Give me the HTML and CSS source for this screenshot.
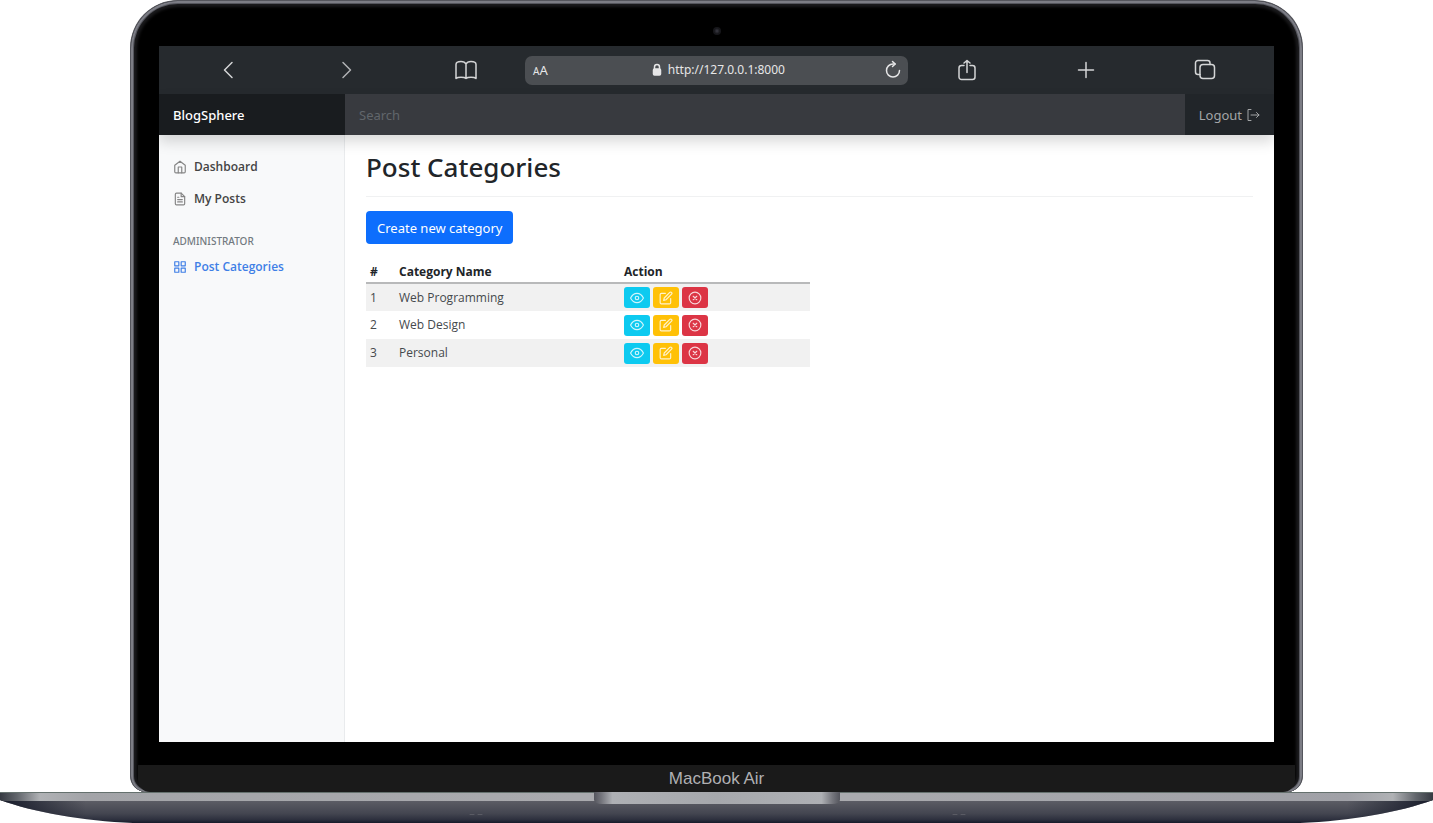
FILE: index.html
```
<!DOCTYPE html>
<html lang="en">
<head>
<meta charset="utf-8">
<title>Post Categories - BlogSphere</title>
<link rel="stylesheet" href="styles.css">
</head>
<body>
<svg class="sprite" aria-hidden="true">
  <symbol id="eye" viewBox="0 0 24 24"><path d="M1 12s4-8 11-8 11 8 11 8-4 8-11 8-11-8-11-8z"/><circle cx="12" cy="12" r="3"/></symbol>
  <symbol id="edit" viewBox="0 0 24 24"><path d="M11 4H4a2 2 0 0 0-2 2v14a2 2 0 0 0 2 2h14a2 2 0 0 0 2-2v-7"/><path d="M18.500 2.500a2.121 2.121 0 0 1 3 3L12 15l-4 1 1-4 9.500-9.500z"/></symbol>
  <symbol id="remove" viewBox="0 0 24 24"><circle cx="12" cy="12" r="10"/><path d="M15 9l-6 6M9 9l6 6"/></symbol>
</svg>
<div class="laptop">
  <div class="lid">
    <span class="camera"></span>
    <div class="screen">
      <div class="toolbar">
        <button class="tool" aria-label="Back"><svg width="24" height="24" viewBox="0 0 24 24"><path d="M16 4.500L8.500 12l7.500 7.500"/></svg></button>
        <button class="tool" aria-label="Forward"><svg class="muted" width="24" height="24" viewBox="0 0 24 24"><path d="M8 4.500l7.500 7.500L8 19.500"/></svg></button>
        <button class="tool" aria-label="Bookmarks"><svg width="24" height="24" viewBox="0 0 24 24"><path d="M12 6C11 4 9.500 3.500 7 3.500c-3 0-5 1-5 3V20.500c1-1 2.500-1.200 5-1.200s4 .2 5 1.200c1-1 2.500-1.200 5-1.200s4 .2 5 1.200V6.500c0-2-2-3-5-3-2.500 0-4 .5-5 2.500zM12 6v14.500"/></svg></button>
        <div class="address">
          <button class="text-size" aria-label="Text size"><span class="small-a">A</span>A</button>
          <label class="location">
            <svg class="lock" width="10" height="14" viewBox="0 0 10 14"><rect x="1.500" y="6" width="7" height="6" rx="1"/><path d="M2.500 6V4a2.500 2.500 0 0 1 5 0v2"/></svg>
            <input class="url" type="text" value="http://127.0.0.1:8000" aria-label="Address">
          </label>
          <button class="reload" aria-label="Reload"><svg width="18" height="20" viewBox="0 0 18 20"><path d="M15.500 10.500a6.500 6.500 0 1 1-6.500-6.500h2"/><path d="M8.500 1.500L11.200 4 8.500 6.500"/></svg></button>
        </div>
        <button class="tool" aria-label="Share"><svg width="24" height="24" viewBox="0 0 24 24"><path d="M9 7.500H6.500a2.500 2.500 0 0 0-2.500 2.500v9a2.500 2.500 0 0 0 2.500 2.500h11a2.500 2.500 0 0 0 2.500-2.500v-9a2.500 2.500 0 0 0-2.500-2.500H15M12 14.500V2.500M9 5l3-2.500L15 5"/></svg></button>
        <button class="tool" aria-label="New tab"><svg width="24" height="24" viewBox="0 0 24 24"><path d="M12 4.500v15M4.500 12h15"/></svg></button>
        <button class="tool" aria-label="Tabs"><svg width="24" height="24" viewBox="0 0 24 24"><rect x="7" y="6.500" width="14.500" height="14" rx="3"/><path d="M7 16.500H5A2.500 2.500 0 0 1 2.500 14V5A2.500 2.500 0 0 1 5 2.500h9.500A2.500 2.500 0 0 1 17 5v1.500"/></svg></button>
      </div>
      <header class="navbar">
        <a class="brand" href="#">BlogSphere</a>
        <input class="search" type="search" placeholder="Search" aria-label="Search">
        <button class="logout">Logout <svg width="14" height="14" viewBox="0 0 14 14"><path d="M5 1.500H2v11h3M5 7h8M10.500 4.500L13 7l-2.500 2.500"/></svg></button>
      </header>
      <div class="page">
        <nav class="sidebar">
          <a class="nav-link" href="#"><svg class="nav-icon" viewBox="0 0 24 24"><path d="M3 9l9-7 9 7v11a2 2 0 0 1-2 2H5a2 2 0 0 1-2-2z"/><path d="M9 22V12h6v10"/></svg>Dashboard</a>
          <a class="nav-link" href="#"><svg class="nav-icon" viewBox="0 0 24 24"><path d="M14 2H6a2 2 0 0 0-2 2v16a2 2 0 0 0 2 2h12a2 2 0 0 0 2-2V8z"/><path d="M14 2v6h6M16 13H8M16 17H8M10 9H8"/></svg>My Posts</a>
          <h2 class="nav-heading">Administrator</h2>
          <a class="nav-link active" href="#"><svg class="nav-icon" viewBox="0 0 24 24"><path d="M3 3h7v7H3zM14 3h7v7h-7zM14 14h7v7h-7zM3 14h7v7H3z"/></svg>Post Categories</a>
        </nav>
        <main class="content">
          <h1 class="title">Post Categories</h1>
          <a class="create" href="#">Create new category</a>
          <table class="categories">
            <thead><tr><th class="col-id">#</th><th class="col-name">Category Name</th><th>Action</th></tr></thead>
            <tbody>
              <tr><td>1</td><td>Web Programming</td><td><div class="actions"><button class="badge view" aria-label="View"><svg><use href="#eye"/></svg></button><button class="badge edit" aria-label="Edit"><svg><use href="#edit"/></svg></button><button class="badge delete" aria-label="Delete"><svg><use href="#remove"/></svg></button></div></td></tr>
              <tr><td>2</td><td>Web Design</td><td><div class="actions"><button class="badge view" aria-label="View"><svg><use href="#eye"/></svg></button><button class="badge edit" aria-label="Edit"><svg><use href="#edit"/></svg></button><button class="badge delete" aria-label="Delete"><svg><use href="#remove"/></svg></button></div></td></tr>
              <tr><td>3</td><td>Personal</td><td><div class="actions"><button class="badge view" aria-label="View"><svg><use href="#eye"/></svg></button><button class="badge edit" aria-label="Edit"><svg><use href="#edit"/></svg></button><button class="badge delete" aria-label="Delete"><svg><use href="#remove"/></svg></button></div></td></tr>
            </tbody>
          </table>
        </main>
      </div>
    </div>
    <div class="chin">MacBook Air</div>
  </div>
  <svg class="base" viewBox="0 0 1433 31" preserveAspectRatio="none" aria-hidden="true">
    <defs>
      <linearGradient id="under" x1="0" y1="0" x2="0" y2="1"><stop offset="0.300" stop-color="#5b5c64"/><stop offset="0.700" stop-color="#434550"/><stop offset="0.900" stop-color="#2c2f3d"/><stop offset="1" stop-color="#161a29"/></linearGradient>
      <linearGradient id="deck" x1="0" y1="0" x2="1" y2="0"><stop offset="0" stop-color="#363a42"/><stop offset="0.012" stop-color="#62666c"/><stop offset="0.028" stop-color="#b0b2b5"/><stop offset="0.060" stop-color="#a3a4a8"/><stop offset="0.400" stop-color="#a9aaae"/><stop offset="0.600" stop-color="#a9aaae"/><stop offset="0.940" stop-color="#a0a1a7"/><stop offset="0.972" stop-color="#b0b2b5"/><stop offset="0.988" stop-color="#62666c"/><stop offset="1" stop-color="#363a42"/></linearGradient>
      <linearGradient id="notch" x1="0" y1="0" x2="1" y2="0"><stop offset="0" stop-color="#54555d"/><stop offset="0.030" stop-color="#74757c"/><stop offset="0.075" stop-color="#aeb0b4"/><stop offset="0.500" stop-color="#a6a8ac"/><stop offset="0.925" stop-color="#aeb0b4"/><stop offset="0.970" stop-color="#74757c"/><stop offset="1" stop-color="#54555d"/></linearGradient>
      <linearGradient id="edge" x1="0" y1="0" x2="1" y2="0"><stop offset="0" stop-color="#161a29"/><stop offset="0.060" stop-color="#161a29" stop-opacity="0"/><stop offset="0.940" stop-color="#161a29" stop-opacity="0"/><stop offset="1" stop-color="#161a29"/></linearGradient>
    </defs>
    <path d="M0 0H1433V8C1400 20 1350 29 1300 31H133C83 29 33 20 0 8z" fill="url(#under)"/>
    <path d="M0 0H1433V8C1400 20 1350 29 1300 31H133C83 29 33 20 0 8z" fill="url(#edge)"/>
    <path d="M0 0H1433V8L1430 9H3L0 8z" fill="url(#deck)"/>
    <path d="M0 .5H1433" stroke="#65716e"/>
    <path d="M594 0H840V8Q839 12 832 12H602Q595 12 594 8z" fill="url(#notch)"/>
    <path d="M470 22.500h4M478 22.500h4M953 22.500h4M961 22.500h4" stroke="#5a5b64"/>
  </svg>
</div>
</body>
</html>
```
FILE: styles.css
```
* { box-sizing: border-box; }
body {
  margin: 0;
  background: #fff;
  color: #212529;
  font-family: "Noto Sans", "Open Sans", sans-serif;
  font-size: 12px;
  line-height: 20px;
}
button, input { font: inherit; color: inherit; border: 0; margin: 0; padding: 0; background: none; }
a { color: inherit; text-decoration: none; }
svg { fill: none; stroke: currentColor; stroke-width: 2; stroke-linecap: round; stroke-linejoin: round; }
.sprite { position: absolute; width: 0; height: 0; }

.laptop { display: flex; flex-direction: column; min-height: 100vh; }
.lid {
  position: relative;
  flex: 1;
  display: flex;
  flex-direction: column;
  margin: 0 130px;
  padding: 45px 28px 0;
  border: solid #55565d;
  border-width: 1px 1px 0;
  border-radius: 48px 48px 16px 16px;
  background: #000;
  box-shadow: inset 0 0 0 2px #7c7d85, inset 0 0 0 3px #55565d, inset 0 0 3px 6px #1a1a1c;
}
.camera {
  position: absolute;
  top: 26px;
  left: 50%;
  width: 8px;
  height: 8px;
  margin-left: -4px;
  border-radius: 50%;
  background: radial-gradient(#34343c 10%, #16161a 50%);
}
.screen { flex: 1; display: flex; flex-direction: column; background: #fff; }

.toolbar {
  display: grid;
  grid-template-columns: repeat(3, 1fr) 383px repeat(3, 1fr);
  align-items: center;
  height: 48px;
  padding: 0 10px;
  background: #262a2e;
  color: #d4d5d6;
}
.tool { display: flex; justify-content: center; }
.tool svg { stroke-width: 1.500; }
.tool .muted { color: #b0b2b4; }
.address {
  display: flex;
  align-items: center;
  justify-content: space-between;
  height: 29px;
  padding: 0 6px 0 8px;
  border-radius: 7px;
  background: #4b4e52;
  color: #e6e6e7;
}
.text-size { font-size: 13px; }
.small-a { font-size: 10px; }
.location { display: flex; align-items: center; gap: 6px; padding-left: 8px; }
.lock { stroke-width: 1.500; }
.lock rect { fill: currentColor; }
.url { width: 120px; }
.reload { display: flex; }
.reload svg { stroke-width: 1.500; }

.navbar {
  position: relative;
  display: flex;
  height: 41px;
  background: #212529;
  box-shadow: 0 7px 14px rgba(0, 0, 0, .15);
}
.brand { width: 186px; padding: 11px 14px; background: #191c1f; color: #fff; font-size: 13px; font-weight: 500; }
.search { flex: 1; padding: 0 14px; background: #383a3f; color: #fff; font-size: 13px; }
.search::placeholder { color: #61666b; opacity: 1; }
.logout { display: flex; align-items: center; gap: 4px; padding: 0 14px; color: #a3a5a7; font-size: 13px; }
.logout svg { stroke-width: 1; }

.page { flex: 1; display: flex; }
.sidebar { width: 186px; padding: 16px 14px; border-right: 1px solid #e9ebed; background: #f8f9fa; }
.nav-link { display: flex; align-items: center; gap: 7px; height: 32px; color: #444; font-family: "Open Sans", sans-serif; font-weight: 600; }
.nav-icon { width: 14px; height: 14px; color: #858585; }
.active, .active .nav-icon { color: #3f7fe6; }
.nav-heading { margin: 16px 0 0; color: #727980; font-size: 10px; font-weight: 500; line-height: 20px; text-transform: uppercase; }

.content { flex: 1; padding: 14px 21px; }
.title { margin: 0 0 14px; padding-bottom: 10px; border-bottom: 1px solid #f0f1f2; font-size: 26px; font-weight: 500; line-height: 37px; }
.create { display: inline-block; padding: 7px 11px 5px; border-radius: 4px; background: #0d6efd; color: #fff; font-size: 13px; line-height: 21px; }
.categories { width: 50%; margin-top: 17px; border-collapse: collapse; font-family: "Open Sans", sans-serif; }
.categories th { padding: 1px 4px 0; border-bottom: 2px solid #b8b9ba; text-align: left; font-weight: 700; line-height: 20px; }
.categories td { height: 28px; padding: 0 4px; color: #45494d; }
.categories tbody tr:nth-child(odd) { background: #f1f1f1; }
.col-id { width: 29px; }
.col-name { width: 225px; }
.actions { display: flex; gap: 3px; }
.badge { display: flex; align-items: center; justify-content: center; width: 26px; height: 21px; border-radius: 3px; color: rgba(255, 255, 255, .8); }
.badge svg { width: 14px; height: 14px; }
.view { background: #0dcaf0; }
.edit { background: #ffc107; }
.delete { background: #dc3545; }

.chin {
  height: 27px;
  margin: 23px -21px 0;
  border-radius: 0 0 12px 12px;
  background: #1a1a1a;
  color: #b0b0b3;
  font-family: "Liberation Sans", sans-serif;
  font-size: 17px;
  line-height: 28px;
  text-align: center;
}
.base { display: block; width: 100%; height: 31px; stroke-width: 1; }
.base path:not([stroke]) { stroke: none; }
```
